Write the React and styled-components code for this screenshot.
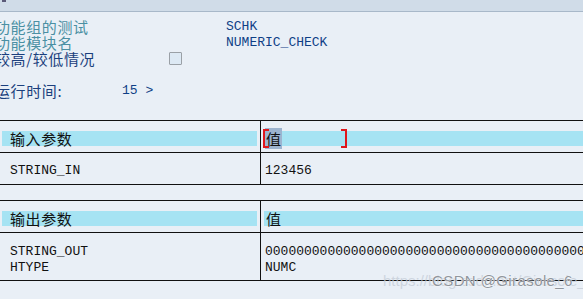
import React from "react";
import styled, { createGlobalStyle } from "styled-components";

const GlobalStyle = createGlobalStyle`
  html, body { margin: 0; padding: 0; background: #e9eff6; overflow: hidden; }
  body { width: 583px; height: 299px; position: relative; }
`;

const CJK = `"Noto Sans CJK SC", "Noto Sans", sans-serif`;
const MONO = `"Liberation Mono", "DejaVu Sans Mono", monospace`;

const Page = styled.div`
  width: 583px;
  height: 299px;
  background: #e9eff6;
  overflow: hidden;
  position: relative;
`;

const TopBar = styled.div`
  height: 11px;
  background: #d0dce8;
  border-bottom: 1px solid #a8b8c9;
  display: flex;
  align-items: flex-start;
  padding-left: 2px;
`;

const TopIcon = styled.div`
  width: 4px;
  height: 2px;
  background: #5b5a78;
`;

const InfoGrid = styled.div`
  display: grid;
  grid-template-columns: 174px 57px 1fr;
  grid-auto-rows: 16px;
  margin: 7px 0 0 -5px;
`;

const Label = styled.div`
  font-family: ${CJK};
  font-size: 15px;
  line-height: 16px;
  letter-spacing: 0.6px;
  white-space: nowrap;
  color: ${(p) => (p.$muted ? "#4a8fa3" : "#1b3f7d")};
`;

const Value = styled.div`
  font-family: ${MONO};
  font-size: 13px;
  line-height: 16px;
  color: #0f3f86;
  white-space: nowrap;
`;

const Checkbox = styled.div`
  width: 11px;
  height: 11px;
  margin-top: 1px;
  border: 1px solid #9aa0a6;
  border-radius: 1px;
  background: #dde9f4;
`;

const RuntimeRow = styled.div`
  display: flex;
  margin: 16px 0 0 -5px;
  height: 16px;
`;

const RuntimeLabel = styled(Label)`
  width: 127px;
`;

const Table = styled.div`
  display: grid;
  grid-template-columns: 261px 1fr;
  border-top: 1px solid #111;
  margin-top: ${(p) => p.$gap}px;
`;

const HeadCell = styled.div`
  position: relative;
  box-sizing: border-box;
  height: 32px;
  padding: 10px ${(p) => (p.$first ? "3px" : "0")} 6px ${(p) => (p.$first ? "2px" : "3px")};
  border-bottom: 1px solid #111;
  border-right: ${(p) => (p.$first ? "1px solid #111" : "none")};
`;

const Band = styled.div`
  height: 15px;
  background: #a6e3f3;
  font-family: ${CJK};
  font-size: 15px;
  line-height: 15px;
  letter-spacing: 0.6px;
  color: #111;
  padding-left: ${(p) => p.$indent}px;
  white-space: nowrap;
`;

const Selected = styled.span`
  background: #9db4cf;
  padding: 0 0 0 1px;
`;

const Bracket = styled.div`
  position: absolute;
  top: 8px;
  left: ${(p) => p.$left}px;
  width: 4px;
  height: 15px;
  border-top: 2px solid #e0161b;
  border-bottom: 2px solid #e0161b;
  ${(p) => (p.$right ? "border-right: 2px solid #e0161b;" : "border-left: 2px solid #e0161b;")}
`;

const BodyCell = styled.div`
  box-sizing: border-box;
  height: ${(p) => p.$h}px;
  padding: ${(p) => p.$top}px 0 0 ${(p) => (p.$first ? "10px" : "4px")};
  border-bottom: 1px solid #111;
  border-right: ${(p) => (p.$first ? "1px solid #111" : "none")};
  font-family: ${MONO};
  font-size: 13px;
  line-height: 16px;
  color: #111;
  white-space: nowrap;
  overflow: hidden;
`;

const WatermarkFaint = styled.div`
  position: absolute;
  left: 383px;
  top: 272px;
  font-family: "Liberation Sans", Arial, sans-serif;
  font-size: 15px;
  line-height: 18px;
  white-space: nowrap;
  color: rgba(196, 204, 214, 0.75);
`;

const WatermarkStrong = styled.div`
  position: absolute;
  left: 432px;
  top: 272px;
  font-family: "Liberation Sans", Arial, sans-serif;
  font-size: 15px;
  line-height: 18px;
  letter-spacing: 0.4px;
  white-space: nowrap;
  color: #90969d;
  text-shadow: 0 0 2px #fff, 0 0 1px #fff;
`;

export default function App() {
  const zeros = "0".repeat(60);
  return (
    <Page>
      <GlobalStyle />
      <TopBar>
        <TopIcon />
      </TopBar>
      <InfoGrid>
        <Label $muted>功能组的测试</Label>
        <div />
        <Value>SCHK</Value>
        <Label $muted>功能模块名</Label>
        <div />
        <Value>NUMERIC_CHECK</Value>
        <Label>较高/较低情况</Label>
        <Checkbox />
        <div />
      </InfoGrid>
      <RuntimeRow>
        <RuntimeLabel>运行时间:</RuntimeLabel>
        <Value>15 &gt;</Value>
      </RuntimeRow>

      <Table $gap={21}>
        <HeadCell $first>
          <Band $indent={8}>输入参数</Band>
        </HeadCell>
        <HeadCell>
          <Band $indent={1}>
            <Selected>值</Selected>
          </Band>
          <Bracket $left={2} />
          <Bracket $left={80} $right />
        </HeadCell>
        <BodyCell $first $h={32} $top={10}>STRING_IN</BodyCell>
        <BodyCell $h={32} $top={10}>123456</BodyCell>
      </Table>

      <Table $gap={15}>
        <HeadCell $first>
          <Band $indent={8}>输出参数</Band>
        </HeadCell>
        <HeadCell>
          <Band $indent={2}>值</Band>
        </HeadCell>
        <BodyCell $first $h={48} $top={11}>
          STRING_OUT
          <br />
          HTYPE
        </BodyCell>
        <BodyCell $h={48} $top={11}>
          {zeros}
          <br />
          NUMC
        </BodyCell>
      </Table>

      <WatermarkFaint>https://blog.csdn.net/Girasole_6</WatermarkFaint>
      <WatermarkStrong>CSDN @Girasole_6</WatermarkStrong>
    </Page>
  );
}
